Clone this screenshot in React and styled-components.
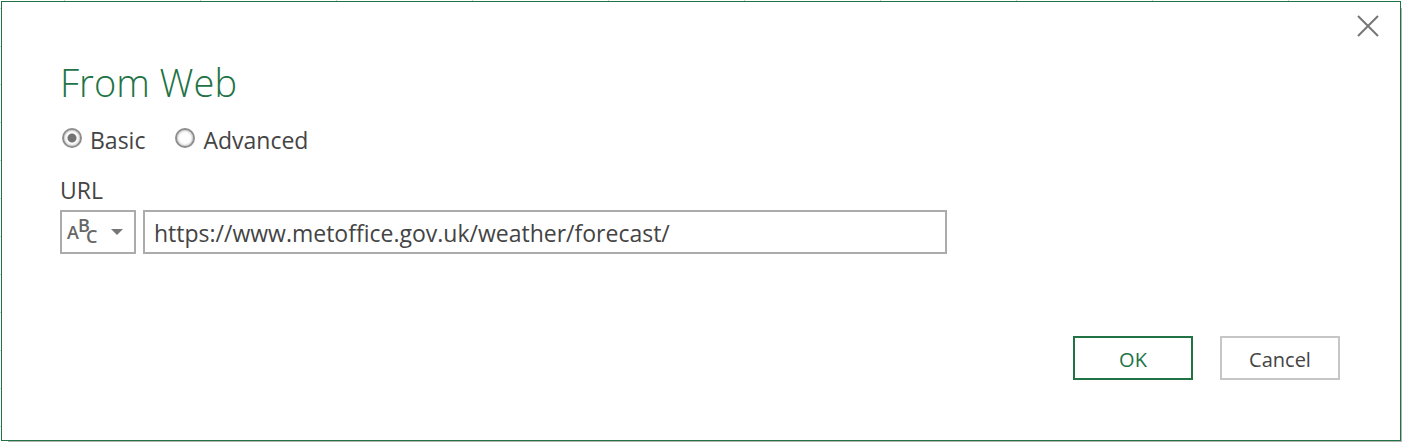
import React, { useState } from "react";
import styled, { createGlobalStyle } from "styled-components";

const GlobalStyle = createGlobalStyle`
  *, *::before, *::after { box-sizing: border-box; }
  body {
    margin: 0;
    background: #fff;
    color: #444;
    font-family: "Segoe UI", "Open Sans", sans-serif;
  }
  button, input, select { font: inherit; color: inherit; }
`;

const Sheet = styled.div`
  min-height: 100vh;
  display: flex;
  padding: 1px;
  background:
    repeating-linear-gradient(to right, transparent 0 64px, #d0d0d0 64px 65px, transparent 65px 136px),
    repeating-linear-gradient(to bottom, transparent 0 8px, #d0d0d0 8px 9px, transparent 9px 38px),
    #fff;
`;

const Dialog = styled.form`
  flex: 1;
  display: flex;
  flex-direction: column;
  padding: 10px 16px 60px 58px;
  border: 1px solid #217346;
  background: #fff;
  box-shadow: 4px 4px 0 -3px #b4b4b4;
`;

const CloseButton = styled.button`
  align-self: flex-end;
  display: flex;
  padding: 3px 5px;
  border: 0;
  background: none;
  color: #767676;
`;

const Title = styled.h1`
  margin: 16px 0 0;
  color: #217346;
  font-size: 38px;
  font-weight: 300;
  line-height: 52px;
`;

const Modes = styled.fieldset`
  display: flex;
  gap: 30px;
  margin: 16px 0 0;
  padding: 0 0 0 2px;
  border: 0;
`;

const Mode = styled.label`
  display: flex;
  gap: 8px;
  font-size: 23px;
  line-height: 32px;
`;

const Radio = styled.input`
  appearance: none;
  width: 20px;
  height: 20px;
  margin: 4px 0 0;
  border: 2px solid #8e8e8e;
  border-radius: 50%;
  background: #fff;
  box-shadow: inset 0 0 2px 1px #ccc;
  &:checked {
    background: radial-gradient(circle, #737373 0 4px, #fff 5px);
  }
`;

const FieldLabel = styled.label`
  margin: 18px 0 4px;
  font-size: 23px;
  line-height: 32px;
`;

const Field = styled.div`
  display: flex;
  gap: 7px;
  width: 68%;
  max-width: 887px;
  min-width: 320px;
`;

const TypeButton = styled.button`
  flex: none;
  width: 76px;
  height: 44px;
  padding: 0;
  border: 2px solid #ababab;
  background: #fff;
`;

const UrlInput = styled.input`
  flex: 1;
  min-width: 0;
  height: 44px;
  padding: 2px 9px 0;
  border: 2px solid #ababab;
  background: #fff;
  font-size: 23px;
`;

const Actions = styled.div`
  display: flex;
  justify-content: flex-end;
  gap: 27px;
  margin-top: auto;
  padding-right: 44px;
`;

const ActionButton = styled.button`
  width: 120px;
  height: 44px;
  padding: 2px 0 0;
  border: 2px solid ${(p) => (p.$primary ? "#217346" : "#c6c6c6")};
  background: #fff;
  color: ${(p) => (p.$primary ? "#217346" : "#444")};
  font-size: 20px;
`;

const TypeText = styled.text`
  fill: #666;
  font-size: 18px;
  font-weight: 600;
`;

function TextTypeIcon() {
  return (
    <svg width="72" height="40" viewBox="0 0 72 40" aria-hidden="true">
      <TypeText x="5" y="27">A</TypeText>
      <TypeText x="16" y="20">B</TypeText>
      <TypeText x="24" y="31">C</TypeText>
      <path d="M49 17H61L55 23Z" fill="#767676" />
    </svg>
  );
}

export default function App() {
  const [mode, setMode] = useState("Basic");
  const [url, setUrl] = useState("https://www.metoffice.gov.uk/weather/forecast/");
  return (
    <>
      <GlobalStyle />
      <Sheet>
        <Dialog role="dialog" aria-labelledby="title" onSubmit={(e) => e.preventDefault()}>
          <CloseButton type="button" aria-label="Close">
            <svg width="22" height="22" viewBox="0 0 22 22" fill="none" stroke="currentColor" strokeWidth="2">
              <path d="M1 1L21 21M21 1L1 21" />
            </svg>
          </CloseButton>
          <Title id="title">From Web</Title>
          <Modes aria-label="Mode">
            {["Basic", "Advanced"].map((name) => (
              <Mode key={name}>
                <Radio type="radio" name="mode" checked={mode === name} onChange={() => setMode(name)} />
                {name}
              </Mode>
            ))}
          </Modes>
          <FieldLabel htmlFor="url">URL</FieldLabel>
          <Field>
            <TypeButton type="button" aria-label="Value type: text" aria-haspopup="listbox">
              <TextTypeIcon />
            </TypeButton>
            <UrlInput id="url" type="text" value={url} onChange={(e) => setUrl(e.target.value)} />
          </Field>
          <Actions>
            <ActionButton type="submit" $primary>OK</ActionButton>
            <ActionButton type="button">Cancel</ActionButton>
          </Actions>
        </Dialog>
      </Sheet>
    </>
  );
}
